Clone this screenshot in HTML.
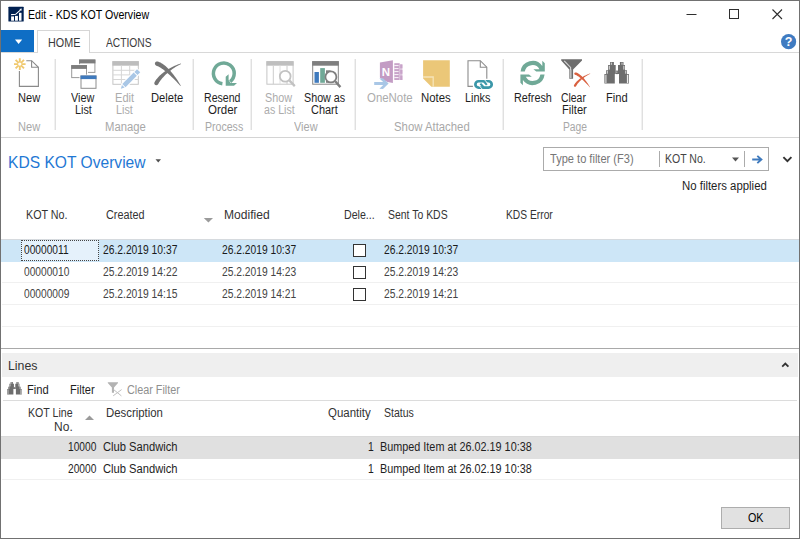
<!DOCTYPE html>
<html lang="en"><head><meta charset="utf-8"><title>Edit - KDS KOT Overview</title>
<style>
html,body{margin:0;padding:0}
body{width:800px;height:539px;position:relative;overflow:hidden;background:#fff;font-family:"Liberation Sans", sans-serif;font-size:12px;color:#1e1e1e}
#win{position:absolute;left:0;top:0;width:800px;height:539px;box-sizing:border-box;border:1px solid #717171;background:#fff}
.a{position:absolute}
.t{position:absolute;white-space:pre;transform-origin:0 0;line-height:14px;display:inline-block}
svg{position:absolute;overflow:visible}
</style></head>
<body>
<div id="win">
</div>
<header id="titlebar" aria-label="Title bar">
<span class="t" style="left:28.12px;top:8.0px;color:#000;transform:scaleX(0.8826);">Edit - KDS KOT Overview</span>
</header>
<nav id="ribbon" aria-label="Ribbon">
<div class="a" style="left:1px;top:30px;width:33px;height:22px;background:#0f6ec5;"></div>
<div class="a" style="left:1px;top:52px;width:37px;height:1px;background:#d8d8d8;"></div>
<div class="a" style="left:89px;top:52px;width:710px;height:1px;background:#d8d8d8;"></div>
<div class="a" style="left:37px;top:30px;width:53px;height:23px;box-sizing:border-box;border:1px solid #d6d6d6;border-bottom:none;"></div>
<div class="a" style="left:1px;top:137px;width:798px;height:1px;background:#d4d4d4;"></div>
<div class="a" style="left:54px;top:59px;width:2px;height:71px;background:linear-gradient(90deg,#f1f1f1 50%,#e0e0e0 50%);"></div>
<div class="a" style="left:192px;top:59px;width:2px;height:71px;background:linear-gradient(90deg,#f1f1f1 50%,#e0e0e0 50%);"></div>
<div class="a" style="left:250px;top:59px;width:2px;height:71px;background:linear-gradient(90deg,#f1f1f1 50%,#e0e0e0 50%);"></div>
<div class="a" style="left:354px;top:59px;width:2px;height:71px;background:linear-gradient(90deg,#f1f1f1 50%,#e0e0e0 50%);"></div>
<div class="a" style="left:502px;top:59px;width:2px;height:71px;background:linear-gradient(90deg,#f1f1f1 50%,#e0e0e0 50%);"></div>
<div class="a" style="left:641px;top:59px;width:2px;height:71px;background:linear-gradient(90deg,#f1f1f1 50%,#e0e0e0 50%);"></div>
<span class="t" style="left:47.6px;top:36.0px;color:#3a3a3a;transform:scaleX(0.8986);">HOME</span>
<span class="t" style="left:105.5px;top:36.0px;color:#3a3a3a;transform:scaleX(0.8531);">ACTIONS</span>
<span class="t" style="left:18.33px;top:91.0px;color:#1e1e1e;transform:scaleX(0.9239);">New</span>
<span class="t" style="left:71.25px;top:91.0px;color:#1e1e1e;transform:scaleX(0.9029);">View</span>
<span class="t" style="left:74.6px;top:103.0px;color:#1e1e1e;transform:scaleX(0.9);">List</span>
<span class="t" style="left:114.58px;top:91.0px;color:#acacac;transform:scaleX(0.9241);">Edit</span>
<span class="t" style="left:116.35px;top:103.0px;color:#acacac;transform:scaleX(0.9);">List</span>
<span class="t" style="left:151.07px;top:91.0px;color:#1e1e1e;transform:scaleX(0.9323);">Delete</span>
<span class="t" style="left:204.12px;top:91.0px;color:#1e1e1e;transform:scaleX(0.8805);">Resend</span>
<span class="t" style="left:208.27px;top:103.0px;color:#1e1e1e;transform:scaleX(0.9583);">Order</span>
<span class="t" style="left:265.05px;top:91.0px;color:#acacac;transform:scaleX(0.8983);">Show</span>
<span class="t" style="left:263.81px;top:103.0px;color:#acacac;transform:scaleX(0.8832);">as List</span>
<span class="t" style="left:303.8px;top:91.0px;color:#1e1e1e;transform:scaleX(0.8944);">Show as</span>
<span class="t" style="left:311.29px;top:103.0px;color:#1e1e1e;transform:scaleX(0.913);">Chart</span>
<span class="t" style="left:366.77px;top:91.0px;color:#acacac;transform:scaleX(0.9521);">OneNote</span>
<span class="t" style="left:421.3px;top:91.0px;color:#1e1e1e;transform:scaleX(0.95);">Notes</span>
<span class="t" style="left:465.09px;top:91.0px;color:#1e1e1e;transform:scaleX(0.9057);">Links</span>
<span class="t" style="left:514.1px;top:91.0px;color:#1e1e1e;transform:scaleX(0.9006);">Refresh</span>
<span class="t" style="left:560.82px;top:91.0px;color:#1e1e1e;transform:scaleX(0.8661);">Clear</span>
<span class="t" style="left:561.57px;top:103.0px;color:#1e1e1e;transform:scaleX(0.9314);">Filter</span>
<span class="t" style="left:605.82px;top:91.0px;color:#1e1e1e;transform:scaleX(0.931);">Find</span>
<span class="t" style="left:18.33px;top:120.0px;color:#a8a8a8;transform:scaleX(0.9239);">New</span>
<span class="t" style="left:105.06px;top:120.0px;color:#a8a8a8;transform:scaleX(0.9405);">Manage</span>
<span class="t" style="left:204.62px;top:120.0px;color:#a8a8a8;transform:scaleX(0.881);">Process</span>
<span class="t" style="left:293.5px;top:120.0px;color:#a8a8a8;transform:scaleX(0.9126);">View</span>
<span class="t" style="left:393.78px;top:120.0px;color:#a8a8a8;transform:scaleX(0.946);">Show Attached</span>
<span class="t" style="left:562.64px;top:120.0px;color:#a8a8a8;transform:scaleX(0.8585);">Page</span>
</nav>
<section id="pagehead" aria-label="Page header">
<div class="a" style="left:543px;top:147px;width:226px;height:24px;background:#fff;box-sizing:border-box;border:1px solid #ababab;"></div>
<div class="a" style="left:659px;top:151px;width:1px;height:16px;background:#ababab;"></div>
<div class="a" style="left:744px;top:151px;width:1px;height:16px;background:#ababab;"></div>
<span class="t" style="left:8.1px;top:156.0px;color:#1f78d4;transform:scaleX(0.9176);font-size:17px;">KDS KOT Overview</span>
<span class="t" style="left:550.27px;top:152.0px;color:#767676;transform:scaleX(0.922);">Type to filter (F3)</span>
<span class="t" style="left:665.12px;top:152.0px;color:#444;transform:scaleX(0.8764);">KOT No.</span>
<span class="t" style="left:682.05px;top:179.0px;color:#1e1e1e;transform:scaleX(0.9487);">No filters applied</span>
</section>
<section id="grid" aria-label="KOT list">
<div class="a" style="left:1px;top:239px;width:798px;height:23px;background:#cde6f7;"></div>
<div class="a" style="left:1px;top:239px;width:798px;height:1px;background:#d6dade;"></div>
<div class="a" style="left:21px;top:240px;width:78px;height:21px;background:#e5f1fb;box-sizing:border-box;border:1px dotted #444;"></div>
<div class="a" style="left:2px;top:282px;width:796px;height:1px;background:#f0f0f0;"></div>
<div class="a" style="left:2px;top:304px;width:796px;height:1px;background:#f0f0f0;"></div>
<div class="a" style="left:2px;top:326px;width:796px;height:1px;background:#f0f0f0;"></div>
<div class="a" style="left:353px;top:244px;width:13px;height:13px;background:#fff;box-sizing:border-box;border:1px solid #333;"></div>
<div class="a" style="left:353px;top:266px;width:13px;height:13px;background:#fff;box-sizing:border-box;border:1px solid #333;"></div>
<div class="a" style="left:353px;top:288px;width:13px;height:13px;background:#fff;box-sizing:border-box;border:1px solid #333;"></div>
<span class="t" style="left:26.36px;top:208.0px;color:#333;transform:scaleX(0.8933);">KOT No.</span>
<span class="t" style="left:106.3px;top:208.0px;color:#333;transform:scaleX(0.9036);">Created</span>
<span class="t" style="left:224.49px;top:208.0px;color:#333;transform:scaleX(1.0057);">Modified</span>
<span class="t" style="left:343.86px;top:208.0px;color:#333;transform:scaleX(0.8855);">Dele...</span>
<span class="t" style="left:387.56px;top:208.0px;color:#333;transform:scaleX(0.8704);">Sent To KDS</span>
<span class="t" style="left:505.89px;top:208.0px;color:#333;transform:scaleX(0.8551);">KDS Error</span>
<span class="t" style="left:23.81px;top:243.0px;color:#1a1a1a;transform:scaleX(0.85);">00000011</span>
<span class="t" style="left:103.07px;top:243.0px;color:#1a1a1a;transform:scaleX(0.8571);">26.2.2019 10:37</span>
<span class="t" style="left:222.07px;top:243.0px;color:#1a1a1a;transform:scaleX(0.8542);">26.2.2019 10:37</span>
<span class="t" style="left:384.32px;top:243.0px;color:#1a1a1a;transform:scaleX(0.8542);">26.2.2019 10:37</span>
<span class="t" style="left:23.81px;top:265.0px;color:#444;transform:scaleX(0.85);">00000010</span>
<span class="t" style="left:103.07px;top:265.0px;color:#444;transform:scaleX(0.8571);">25.2.2019 14:22</span>
<span class="t" style="left:222.07px;top:265.0px;color:#444;transform:scaleX(0.8542);">25.2.2019 14:23</span>
<span class="t" style="left:384.32px;top:265.0px;color:#444;transform:scaleX(0.8542);">25.2.2019 14:23</span>
<span class="t" style="left:23.81px;top:287.0px;color:#444;transform:scaleX(0.85);">00000009</span>
<span class="t" style="left:103.07px;top:287.0px;color:#444;transform:scaleX(0.8571);">25.2.2019 14:15</span>
<span class="t" style="left:222.07px;top:287.0px;color:#444;transform:scaleX(0.8542);">25.2.2019 14:21</span>
<span class="t" style="left:384.32px;top:287.0px;color:#444;transform:scaleX(0.8542);">25.2.2019 14:21</span>
</section>
<section id="lines" aria-label="Lines">
<div class="a" style="left:1px;top:348px;width:798px;height:1px;background:#a9a9a9;"></div>
<div class="a" style="left:2px;top:353px;width:796px;height:24px;background:#efefef;"></div>
<div class="a" style="left:3px;top:400px;width:794px;height:1px;background:#dcdcdc;"></div>
<div class="a" style="left:1px;top:436px;width:798px;height:23px;background:#e0e0e0;"></div>
<div class="a" style="left:1px;top:436px;width:798px;height:1px;background:#dadada;"></div>
<div class="a" style="left:2px;top:479px;width:796px;height:1px;background:#f0f0f0;"></div>
<span class="t" style="left:7.8px;top:359.0px;color:#333;transform:scaleX(0.9492);font-size:13px;">Lines</span>
<span class="t" style="left:27.07px;top:383.0px;color:#1e1e1e;transform:scaleX(0.931);">Find</span>
<span class="t" style="left:70.08px;top:383.0px;color:#1e1e1e;transform:scaleX(0.9216);">Filter</span>
<span class="t" style="left:126.8px;top:383.0px;color:#8f8f8f;transform:scaleX(0.9009);">Clear Filter</span>
<span class="t" style="left:27.87px;top:406.0px;color:#333;transform:scaleX(0.8827);">KOT Line</span>
<span class="t" style="left:54.12px;top:420.0px;color:#333;transform:scaleX(1.0);">No.</span>
<span class="t" style="left:105.8px;top:406.0px;color:#333;transform:scaleX(0.9485);">Description</span>
<span class="t" style="left:328.02px;top:406.0px;color:#333;transform:scaleX(0.9548);">Quantity</span>
<span class="t" style="left:383.81px;top:406.0px;color:#333;transform:scaleX(0.8788);">Status</span>
<span class="t" style="left:68.3px;top:440.0px;color:#1e1e1e;transform:scaleX(0.85);">10000</span>
<span class="t" style="left:103.28px;top:440.0px;color:#1e1e1e;transform:scaleX(0.9302);">Club Sandwich</span>
<span class="t" style="left:367.76px;top:440.0px;color:#1e1e1e;transform:scaleX(0.86);">1</span>
<span class="t" style="left:380.35px;top:440.0px;color:#1e1e1e;transform:scaleX(0.9025);">Bumped Item at 26.02.19 10:38</span>
<span class="t" style="left:68.3px;top:462.0px;color:#1e1e1e;transform:scaleX(0.85);">20000</span>
<span class="t" style="left:103.28px;top:462.0px;color:#1e1e1e;transform:scaleX(0.9302);">Club Sandwich</span>
<span class="t" style="left:367.76px;top:462.0px;color:#1e1e1e;transform:scaleX(0.86);">1</span>
<span class="t" style="left:380.35px;top:462.0px;color:#1e1e1e;transform:scaleX(0.9025);">Bumped Item at 26.02.19 10:38</span>
</section>
<footer id="footer" aria-label="Dialog buttons">
<div class="a" style="left:721px;top:507px;width:69px;height:22px;background:#e1e1e1;box-sizing:border-box;border:1px solid #adadad;"></div>
<span class="t" style="left:747.55px;top:511.0px;color:#000;transform:scaleX(0.8955);">OK</span>
</footer>
<svg width="800" height="539" viewBox="0 0 800 539" style="left:0;top:0">
<!-- app icon -->
<g id="ic-app">
<rect x="8.4" y="6.7" width="15.3" height="14.9" rx="0.6" fill="#002050"/>
<rect x="11.1" y="16.4" width="2.9" height="4.3" fill="#fff"/>
<rect x="15" y="15.9" width="2.9" height="4.8" fill="#fff"/>
<rect x="19" y="12.8" width="2.5" height="7.9" fill="#fff"/>
<path d="M11.1 14.6 L15.6 14.3 L20.6 9.9" fill="none" stroke="#fff" stroke-width="1.1"/>
<path d="M19.3 9.1 L21.8 8.6 L21.3 11.1 Z" fill="#fff"/>
</g>
<!-- app menu triangle -->
<path d="M15 39.5 H22.2 L18.6 44 Z" fill="#fff"/>
<!-- window controls -->
<g id="ic-winctl" stroke="#2e2e2e" stroke-width="1" fill="none">
<path d="M686.5 14.5 H696.5"/>
<rect x="729.5" y="9.5" width="9" height="9"/>
<path d="M772.5 9.5 L782 19 M782 9.5 L772.5 19" stroke-width="1.1"/>
</g>
<!-- help -->
<g id="ic-help">
<circle cx="788.6" cy="41.7" r="7.6" fill="#3f7bc1"/>
<text x="788.6" y="46.2" text-anchor="middle" font-family="Liberation Sans, sans-serif" font-weight="bold" font-size="12.5" fill="#fff">?</text>
</g>
<!-- New -->
<g id="ic-new">
<path d="M26.3 60.7 H31.6 L38.4 67.3 V86.4 H19.4 V71" fill="none" stroke="#8a8a8a" stroke-width="1.1"/>
<path d="M31.6 60.7 V67.3 H38.4" fill="none" stroke="#8a8a8a" stroke-width="1.1"/>
<g stroke="#f0c96f" stroke-width="1.9" stroke-linecap="butt">
<path d="M19.8 58.3 V69.9 M14 64.1 H25.6 M15.6 59.9 L24 68.3 M24 59.9 L15.6 68.3"/>
</g>
<circle cx="19.8" cy="64.1" r="1.7" fill="#fff"/>
</g>
<!-- View List -->
<g id="ic-viewlist">
<rect x="79.6" y="60" width="15.3" height="12.4" fill="#fff" stroke="#9a9a9a" stroke-width="1"/>
<rect x="79.1" y="59.5" width="16.3" height="3.9" fill="#7d7d7d"/>
<rect x="70.4" y="64.2" width="17.6" height="14.6" fill="#fff"/>
<rect x="71.7" y="65.6" width="14.8" height="12" fill="#fff" stroke="#9a9a9a" stroke-width="1"/>
<rect x="71.2" y="65.1" width="15.8" height="3.8" fill="#7d7d7d"/>
<rect x="79.5" y="74.6" width="17.8" height="15" fill="#fff"/>
<rect x="81" y="76" width="15" height="12.3" fill="#fff" stroke="#8d8d8d" stroke-width="1"/>
<rect x="80.5" y="75.5" width="16" height="3.6" fill="#3f7abd"/>
</g>
<!-- Edit List (disabled) -->
<g id="ic-editlist">
<rect x="112.9" y="61.7" width="25.4" height="22.6" fill="#fff" stroke="#c6c6c6" stroke-width="1"/>
<rect x="112.4" y="61.2" width="26.4" height="4.5" fill="#bdbdbd"/>
<path d="M121.4 65.7 V84.3 M129.7 65.7 V84.3 M113 70.3 H138.3 M113 74.9 H138.3 M113 79.5 H138.3" stroke="#d6d6d6" stroke-width="1" fill="none"/>
<path d="M119.92 89.70 L126.09 88.21 L141.70 72.43 L136.94 67.72 L121.33 83.50 Z" fill="#fff"/>
<path d="M120.97 88.77 L124.64 87.62 L121.94 84.95 L120.83 88.63 Z" fill="#a9c7e6"/>
<path d="M125.52 87.22 L136.84 75.78 L133.64 72.61 L122.32 84.06 Z" fill="#a9c7e6"/>
<path d="M137.55 75.07 L140.22 72.36 L137.02 69.20 L134.35 71.90 Z" fill="#a9c7e6"/>
</g>
<!-- Delete -->
<g id="ic-delete" fill="#757575">
<path d="M156.36 65.65 L157.07 65.90 L157.76 66.19 L158.50 66.54 L159.29 66.97 L160.14 67.46 L161.02 68.02 L161.95 68.65 L162.91 69.33 L163.91 70.08 L164.95 70.89 L166.01 71.76 L167.10 72.68 L168.22 73.66 L169.36 74.69 L170.52 75.77 L171.70 76.89 L172.90 78.07 L174.12 79.28 L175.35 80.54 L176.60 81.84 L177.86 83.17 L179.12 84.54 L180.40 85.95 L180.80 85.65 L179.83 84.01 L178.84 82.41 L177.84 80.85 L176.84 79.34 L175.82 77.86 L174.79 76.44 L173.76 75.06 L172.73 73.74 L171.69 72.47 L170.65 71.25 L169.62 70.09 L168.58 68.99 L167.55 67.96 L166.52 66.98 L165.50 66.08 L164.48 65.24 L163.47 64.47 L162.47 63.78 L161.47 63.16 L160.49 62.62 L159.50 62.17 L158.53 61.80 L157.64 61.55 L156.53 61.50 L155.54 62.02 L154.95 62.96 L154.90 64.07 L155.42 65.06 Z"/>
<path d="M158.07 84.23 L158.55 83.38 L159.05 82.54 L159.62 81.68 L160.23 80.81 L160.90 79.91 L161.62 79.01 L162.40 78.09 L163.22 77.17 L164.09 76.24 L165.01 75.30 L165.98 74.37 L167.00 73.43 L168.06 72.50 L169.17 71.58 L170.32 70.66 L171.52 69.76 L172.76 68.86 L174.04 67.98 L175.37 67.12 L176.73 66.28 L178.14 65.46 L179.59 64.66 L181.08 63.88 L180.92 63.52 L179.32 64.03 L177.74 64.59 L176.19 65.18 L174.68 65.82 L173.20 66.49 L171.76 67.20 L170.36 67.93 L169.00 68.70 L167.69 69.49 L166.41 70.31 L165.19 71.15 L164.00 72.01 L162.87 72.89 L161.79 73.78 L160.76 74.69 L159.78 75.61 L158.85 76.53 L157.98 77.47 L157.17 78.41 L156.41 79.36 L155.71 80.31 L155.08 81.26 L154.53 82.17 L154.25 83.19 L154.52 84.22 L155.27 84.97 L156.29 85.25 L157.32 84.98 Z"/>
</g>
<!-- Resend Order -->
<g id="ic-resend">
<path d="M222.4 83.7 A10.4 10.4 0 1 1 230.2 81.6" fill="none" stroke="#70a997" stroke-width="3.5"/>
<path d="M225.7 76.8 L228.6 74.3 V80 L230.6 82.9 H237 L234 85.8 H225.7 Z" fill="#70a997"/>
</g>
<!-- Show as List (disabled) -->
<g id="ic-showlist">
<rect x="266.9" y="61.7" width="26.2" height="22.5" fill="#fff" stroke="#c6c6c6" stroke-width="1"/>
<rect x="266.4" y="61.2" width="27.2" height="4.5" fill="#bfbfbf"/>
<path d="M273.3 65.7 V84.2 M287 65.7 V84.2" stroke="#cccccc" stroke-width="1" fill="none"/>
<path d="M280 65.7 V84.2" stroke="#e0e0e0" stroke-width="1" fill="none"/>
<circle cx="285.2" cy="76.2" r="5.4" fill="#fff" stroke="#c2c2c2" stroke-width="1.8"/>
<path d="M289.3 80.4 L294.8 86.1" stroke="#c2c2c2" stroke-width="2.3" fill="none"/>
</g>
<!-- Show as Chart -->
<g id="ic-showchart">
<rect x="312.7" y="61.7" width="25.6" height="22.5" fill="#fff" stroke="#858585" stroke-width="1"/>
<rect x="312.2" y="61.2" width="26.6" height="4.5" fill="#7f7f7f"/>
<rect x="314.5" y="72" width="4.4" height="10.8" fill="#3f7abd"/>
<rect x="320.2" y="68.1" width="4.7" height="14.7" fill="#70a997"/>
<rect x="326" y="70.3" width="4.5" height="12.5" fill="#7f7f7f"/>
<circle cx="330.9" cy="76.9" r="5.5" fill="#fff" stroke="#7f7f7f" stroke-width="1.8"/>
<path d="M335.2 81.3 L340.4 87.1" stroke="#7f7f7f" stroke-width="2.4" fill="none"/>
</g>
<!-- OneNote (disabled) -->
<g id="ic-onenote">
<rect x="394.3" y="63.2" width="5.4" height="16.8" fill="#c8a3c9"/>
<path d="M394.3 65.6 H398.6 M394.3 68.6 H398.6 M394.3 71.6 H398.6 M394.3 74.6 H398.6 M394.3 77.6 H398.6" stroke="#fff" stroke-width="0.9"/>
<rect x="399.7" y="64.4" width="2.7" height="15.6" fill="#dcc3dd"/>
<rect x="400.2" y="64.4" width="2.2" height="3.8" fill="#c8a3c9"/>
<rect x="400.2" y="70" width="2.2" height="3.8" fill="#c8a3c9"/>
<rect x="400.2" y="75.6" width="2.2" height="4.4" fill="#c8a3c9"/>
<path d="M379.9 62.5 L392.9 60.2 V82.9 L379.9 80.4 Z" fill="#c39cc4"/>
<text x="385.8" y="75.6" text-anchor="middle" font-family="Liberation Sans, sans-serif" font-weight="bold" font-size="11.5" fill="#fff">N</text>
<path d="M378.6 77 L389.6 83.4 L380 90.4 L373 86.5 V80 Z" fill="#fff"/>
<path d="M374.2 82.1 H383.2 L379.4 78.4 L383 78.2 L388.6 83.5 L383 89 L379.4 88.8 L383.2 85 H374.2 Z" fill="#a9c7e6"/>
</g>
<!-- Notes -->
<g id="ic-notes">
<path d="M423.1 60.2 H449.8 V86.8 H431.4 L423.1 78.4 Z" fill="#ebc778"/>
<path d="M423.1 77 H433.2 V86.8" fill="none" stroke="#f6e4b8" stroke-width="1.3"/>
</g>
<!-- Links -->
<g id="ic-links">
<path d="M472.9 86.4 H468 V60.7 H480.3 L486.8 67.2 V78.7" fill="none" stroke="#8c8c8c" stroke-width="1.1"/>
<path d="M480.3 60.7 V67.2 H486.8" fill="none" stroke="#8c8c8c" stroke-width="1.1"/>
<rect x="475.4" y="81.25" width="16.3" height="6.3" rx="3.15" fill="none" stroke="#3b97a9" stroke-width="2.7"/>
<path d="M480.4 83.6 L483.6 87.2" stroke="#3b97a9" stroke-width="2.1" fill="none"/>
<path d="M484 81.6 L486.8 84.9" stroke="#3b97a9" stroke-width="2.1" fill="none"/>
<path d="M479.3 85.9 L482.3 89.2" stroke="#fff" stroke-width="0.9" fill="none"/>
<path d="M484.4 79.6 L487.4 83" stroke="#fff" stroke-width="0.9" fill="none"/>
</g>
<!-- Refresh -->
<g id="ic-refresh" fill="#70a997">
<g>
<path d="M520.6 71.6 A12 12 0 0 1 542.3 66 V60.7 L544.8 63.2 V71.6 H536.2 L533.4 69.2 H539.4 A7.8 7.8 0 0 0 524.8 71.6 Z"/>
</g>
<g transform="rotate(180 532.6 73)">
<path d="M520.6 71.6 A12 12 0 0 1 542.3 66 V60.7 L544.8 63.2 V71.6 H536.2 L533.4 69.2 H539.4 A7.8 7.8 0 0 0 524.8 71.6 Z"/>
</g>
</g>
<!-- Clear Filter -->
<g id="ic-clearfilter">
<path d="M561.2 59.3 H582 V60.6 L573.1 69.6 V78.7 H569.3 V69.6 L561.2 60.6 Z" fill="#6d6d6d"/>
<path d="M569.7 69.6 H571.6 V78.2 H569.7 Z" fill="#bdbdbd"/>
<path d="M564.2 60.8 L570.6 67.4 V70" stroke="#d6d6d6" stroke-width="1.1" fill="none"/>
<g fill="#d9603f">
<path d="M575.08 74.76 L575.53 74.91 L575.95 75.09 L576.42 75.31 L576.91 75.58 L577.43 75.88 L577.98 76.23 L578.55 76.62 L579.15 77.04 L579.76 77.51 L580.40 78.01 L581.05 78.55 L581.72 79.12 L582.40 79.73 L583.10 80.37 L583.81 81.03 L584.54 81.73 L585.27 82.46 L586.01 83.21 L586.76 83.99 L587.52 84.80 L588.29 85.62 L589.06 86.47 L589.84 87.34 L590.08 87.16 L589.48 86.16 L588.86 85.18 L588.24 84.23 L587.61 83.30 L586.98 82.40 L586.34 81.53 L585.71 80.69 L585.07 79.88 L584.42 79.10 L583.78 78.36 L583.14 77.65 L582.50 76.98 L581.87 76.35 L581.24 75.76 L580.61 75.20 L579.98 74.69 L579.37 74.23 L578.75 73.80 L578.14 73.43 L577.54 73.10 L576.94 72.82 L576.35 72.59 L575.81 72.44 L575.18 72.41 L574.62 72.70 L574.28 73.24 L574.26 73.87 L574.55 74.42 Z"/>
<path d="M576.02 86.24 L576.31 85.71 L576.63 85.19 L576.97 84.66 L577.36 84.12 L577.77 83.57 L578.22 83.01 L578.70 82.45 L579.21 81.88 L579.75 81.31 L580.32 80.74 L580.92 80.16 L581.55 79.59 L582.21 79.02 L582.89 78.46 L583.61 77.90 L584.35 77.34 L585.12 76.80 L585.91 76.26 L586.73 75.74 L587.57 75.23 L588.44 74.73 L589.33 74.24 L590.25 73.77 L590.16 73.55 L589.17 73.87 L588.21 74.22 L587.26 74.59 L586.33 74.99 L585.43 75.41 L584.55 75.85 L583.69 76.31 L582.86 76.78 L582.05 77.27 L581.27 77.78 L580.52 78.30 L579.80 78.83 L579.11 79.37 L578.45 79.92 L577.82 80.48 L577.22 81.04 L576.65 81.62 L576.12 82.19 L575.62 82.77 L575.16 83.35 L574.74 83.93 L574.35 84.51 L574.01 85.07 L573.85 85.65 L574.01 86.23 L574.43 86.66 L575.01 86.81 L575.59 86.66 Z"/>
</g>
</g>
<!-- Find -->
<g id="ic-find">
<g>
<path d="M610.1 62.1 H613.9 V65.1 H615.7 V74.1 H614.8 V83.6 H604.4 V74.1 H606.1 V70.2 H608.1 V65.1 H610.1 Z" fill="#6d6d6d"/>
<path d="M619.9 62.1 H623.5 V65.1 H625 V70.2 H627 V74.1 H628.9 V83.6 H619 V74.1 H618 V65.1 H619.9 Z" fill="#6d6d6d"/>
<rect x="615.7" y="70.6" width="2.3" height="3.5" fill="#6d6d6d"/>
<rect x="616.3" y="71.6" width="1" height="1" fill="#e8e8e8"/>
<rect x="604.9" y="74.8" width="1.8" height="8.2" fill="#b9b9b9"/>
<rect x="606.8" y="70.9" width="1.2" height="2.8" fill="#c6c6c6"/>
<rect x="608.8" y="65.8" width="1.2" height="3.8" fill="#c6c6c6"/>
<rect x="610.9" y="62.6" width="1.2" height="2.2" fill="#c6c6c6"/>
<rect x="626.9" y="74.8" width="1.3" height="8.2" fill="#efefef"/>
<rect x="625.2" y="70.9" width="1.1" height="2.8" fill="#d6d6d6"/>
<rect x="623.3" y="65.8" width="1.1" height="3.8" fill="#d6d6d6"/>
<rect x="621.4" y="62.6" width="1.2" height="2.2" fill="#c6c6c6"/>
</g>
</g>
<!-- title dropdown + sort arrows -->
<path d="M155.5 159.2 H161 L158.25 162.6 Z" fill="#505050"/>
<path d="M203.8 218 H213 L208.4 222.6 Z" fill="#9b9b9b"/>
<path d="M85 420 H94 L89.5 415.5 Z" fill="#9b9b9b"/>
<!-- filter box glyphs -->
<path d="M732 157.5 H739 L735.5 161.6 Z" fill="#555"/>
<path d="M752.2 159.5 H760.6 M757.3 155.9 L761.4 159.5 L757.3 163.1" fill="none" stroke="#3f7abd" stroke-width="1.9"/>
<path d="M783.4 157.2 L787.4 161.2 L791.4 157.2" fill="none" stroke="#333" stroke-width="1.9"/>
<!-- Lines collapse chevron -->
<path d="M782.2 366.6 L785.3 363.5 L788.4 366.6" fill="none" stroke="#333" stroke-width="1.8"/>
<!-- small toolbar icons -->
<g id="ic-find-sm" transform="translate(7.2 382) scale(0.595 0.586) translate(-604.4 -62.1)">
<path d="M610.1 62.1 H613.9 V65.1 H615.7 V74.1 H614.8 V83.6 H604.4 V74.1 H606.1 V70.2 H608.1 V65.1 H610.1 Z" fill="#6d6d6d"/>
<path d="M619.9 62.1 H623.5 V65.1 H625 V70.2 H627 V74.1 H628.9 V83.6 H619 V74.1 H618 V65.1 H619.9 Z" fill="#6d6d6d"/>
<rect x="615.7" y="70.6" width="2.3" height="3.5" fill="#6d6d6d"/>
<rect x="616.3" y="71.6" width="1" height="1" fill="#e8e8e8"/>
<rect x="604.9" y="74.8" width="1.8" height="8.2" fill="#b9b9b9"/>
<rect x="606.8" y="70.9" width="1.2" height="2.8" fill="#c6c6c6"/>
<rect x="608.8" y="65.8" width="1.2" height="3.8" fill="#c6c6c6"/>
<rect x="610.9" y="62.6" width="1.2" height="2.2" fill="#c6c6c6"/>
<rect x="626.9" y="74.8" width="1.3" height="8.2" fill="#efefef"/>
<rect x="625.2" y="70.9" width="1.1" height="2.8" fill="#d6d6d6"/>
<rect x="623.3" y="65.8" width="1.1" height="3.8" fill="#d6d6d6"/>
<rect x="621.4" y="62.6" width="1.2" height="2.2" fill="#c6c6c6"/>
</g>
<g id="ic-clearfilter-sm">
<path d="M107.8 382.2 H118 V382.9 L114 387.4 V392.8 H111.9 V387.4 L107.8 382.9 Z" fill="#b3b3b3"/>
<path d="M113.4 389.4 L121.4 395.9 M113.2 395.8 L121.6 389.6" stroke="#c0c0c0" stroke-width="1" fill="none"/>
</g>
</svg>

</body></html>
